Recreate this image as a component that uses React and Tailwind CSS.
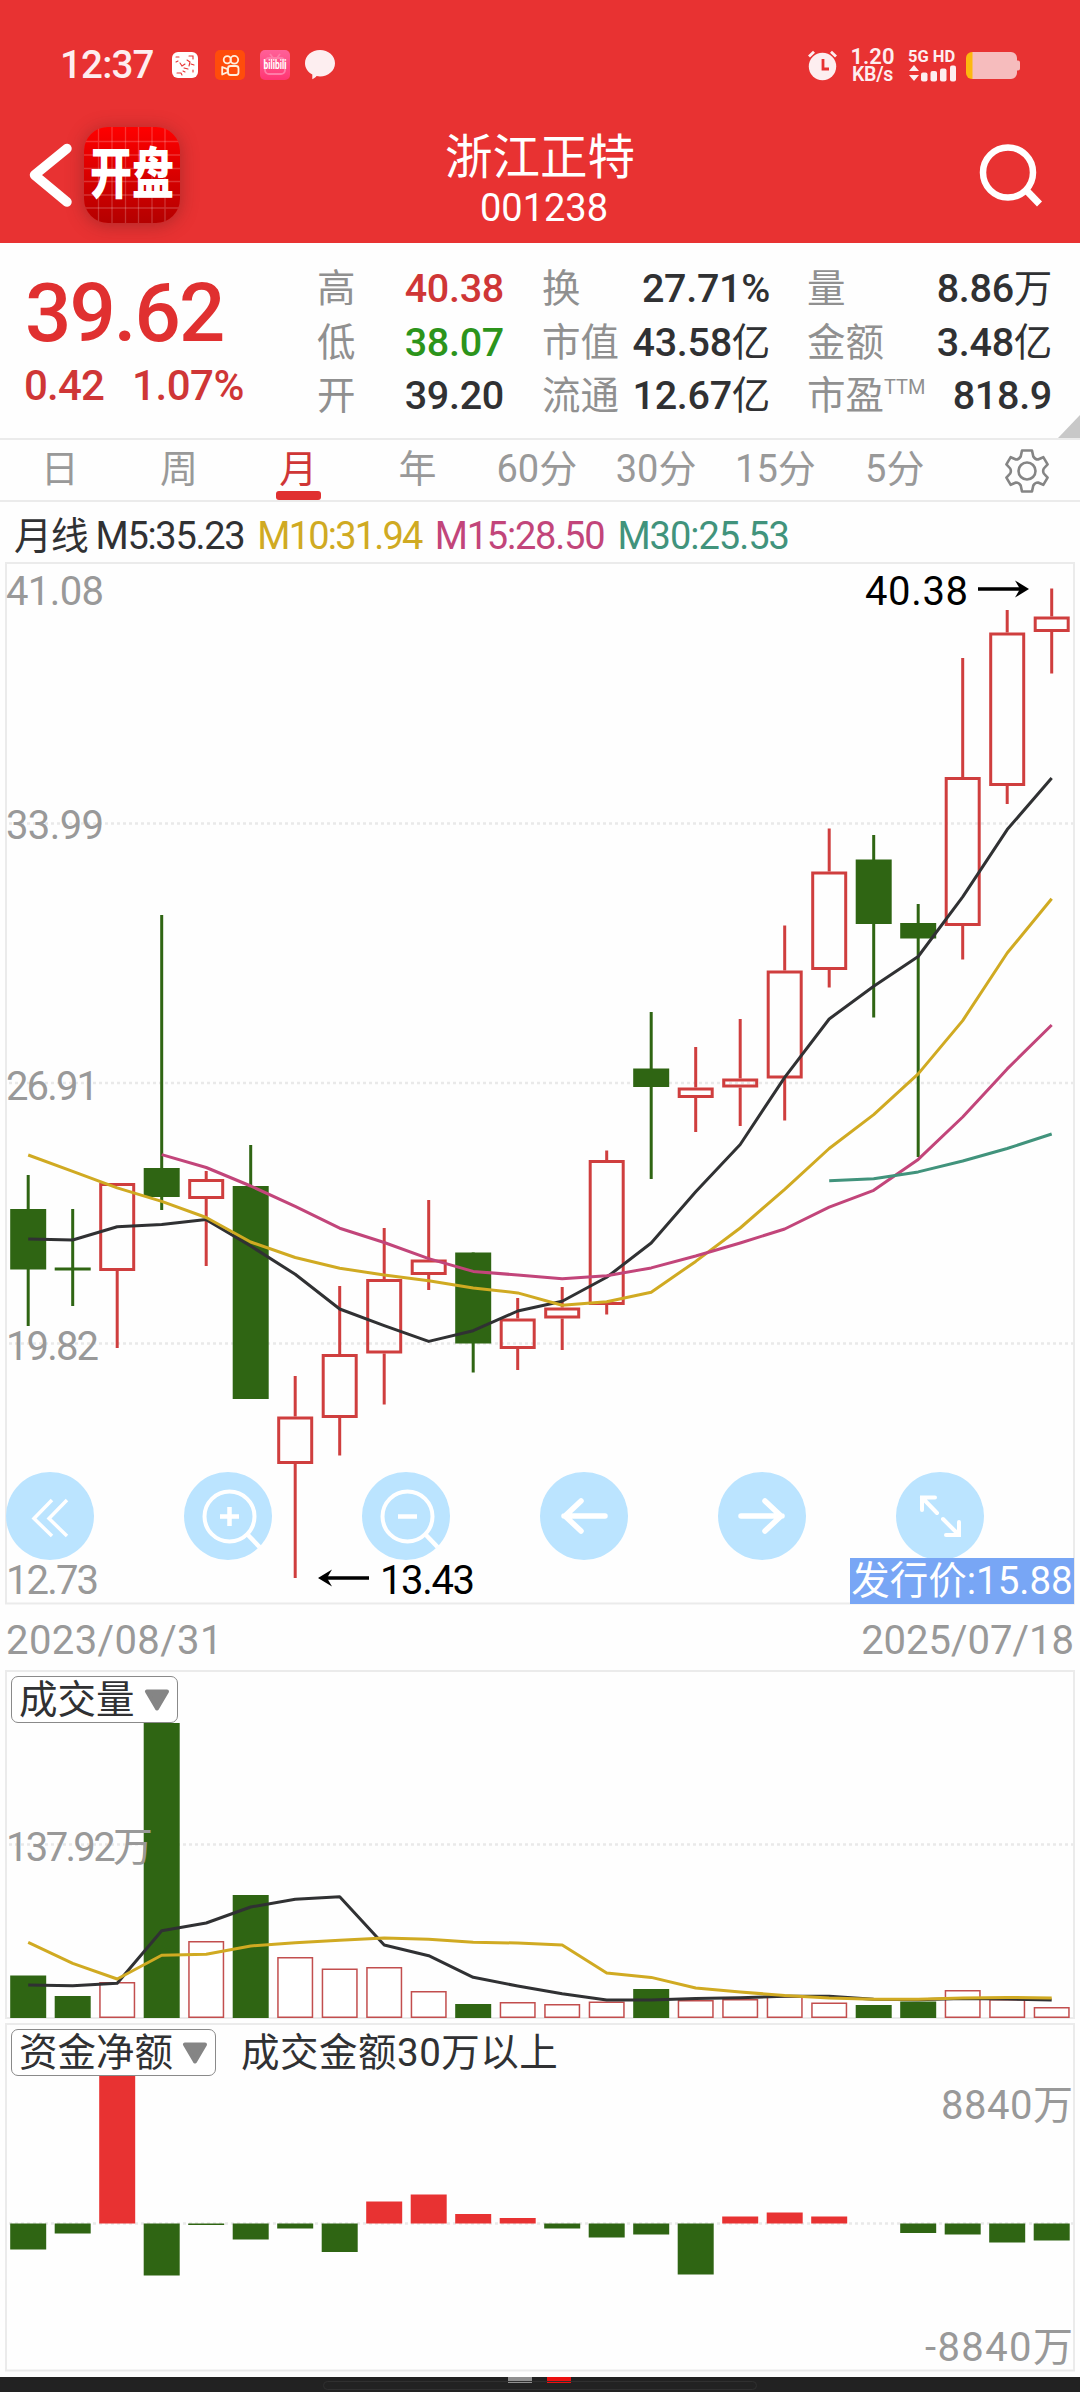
import { Fragment } from "react";

const UP = "#cf3e3e";
const DOWN = "#2f6513";
const STEP = 44.5;
const FIRST_X = 28.2;
const BAR_W = 36;

// [direction, high, body top, body bottom, low] in chart units
const candles = [
  ["down", 1175, 1209, 1269.5, 1326],
  ["down", 1209, 1267.5, 1270.5, 1306],
  ["up", 1183, 1183, 1271, 1348],
  ["down", 915, 1168, 1197, 1210],
  ["up", 1171, 1179, 1199, 1266],
  ["down", 1145, 1186, 1399, 1399],
  ["up", 1376, 1416.5, 1464, 1578],
  ["up", 1286, 1354, 1418, 1455.5],
  ["up", 1228, 1279, 1353.5, 1404.5],
  ["up", 1200, 1259.5, 1275, 1290],
  ["down", 1252.5, 1252.5, 1343.5, 1372.5],
  ["up", 1298, 1318.5, 1349, 1370],
  ["up", 1287, 1307.5, 1318.5, 1350],
  ["up", 1150.5, 1160, 1305, 1314.5],
  ["down", 1012, 1068.5, 1087, 1179],
  ["up", 1047, 1087.5, 1098, 1132],
  ["up", 1019, 1078.5, 1087.5, 1126],
  ["up", 925.5, 970.5, 1078.5, 1120.5],
  ["up", 828.5, 871.5, 970, 987.5],
  ["down", 835, 859.5, 924, 1017.5],
  ["down", 904, 923, 938.5, 1157],
  ["up", 658, 777, 926, 959.5],
  ["up", 610, 632.5, 786, 804],
  ["up", 588.5, 616.5, 632, 673.5],
];

const priceLines = [
  {
    color: "#303133",
    start: 0,
    values: [1239, 1240, 1226.8, 1224.6, 1219.6, 1246, 1274.3, 1309, 1325.7, 1341.4, 1330.7, 1311, 1301.2, 1277.3, 1243, 1191.7, 1144.5, 1077.3, 1019, 986.3, 956.5, 896.8, 829.6, 777.9],
  },
  {
    color: "#d0aa22",
    start: 0,
    values: [1155, 1171.4, 1187.9, 1201.4, 1217.5, 1242, 1257.5, 1268.2, 1275, 1280.7, 1287.9, 1292.9, 1305.2, 1301.7, 1292.2, 1261.4, 1228, 1189.3, 1148.5, 1114.6, 1073.9, 1020.6, 953, 898.8],
  },
  {
    color: "#c2457a",
    start: 3,
    values: [1154.6, 1167.5, 1186, 1206.4, 1228.2, 1242.5, 1258.6, 1271.4, 1275, 1278.8, 1275.8, 1267.9, 1256, 1243, 1229, 1207.2, 1190.3, 1159.4, 1117, 1068.9, 1025],
  },
  { color: "#41937c", start: 18, values: [1180.8, 1178.8, 1171.9, 1161, 1148.5, 1134] },
];

const volumeTops = [1975.5, 1996, 1982, 1723, 1941, 1895, 1957, 1968.5, 1967, 1991, 2004, 2002, 2004, 2001.5, 1989, 2000, 1999, 1996, 2002.5, 2005, 2001.5, 1990, 1999, 2007];

const volumeLines = [
  {
    color: "#303133",
    start: 0,
    values: [1985, 1985.7, 1983.3, 1930.7, 1923, 1907, 1899.3, 1896.7, 1945, 1955.7, 1977.3, 1986, 1993.7, 2000, 2000, 1998.6, 1997.8, 1996.3, 1996.3, 1999.3, 1999.7, 1998.6, 1999, 2000],
  },
  {
    color: "#d0aa22",
    start: 0,
    values: [1942.3, 1963.3, 1979, 1955.3, 1954.3, 1946, 1942.7, 1940.3, 1938, 1939.3, 1942.3, 1943, 1945, 1972.9, 1977.4, 1988, 1992, 1995.5, 1998, 1999.3, 1999.3, 1998, 1997.4, 1998],
  },
];

const netFlows = [-26, -10, 148, -52, -1.5, -16, -5, -28.5, 22, 29, 9.5, 5.5, -5, -14, -11, -51, 7, 11, 7, 0, -9.5, -11, -19, -17];

const stats = [
  {
    className: "ml-[317px] w-[187px]",
    rows: [
      { label: "高", value: "40.38", color: "text-[#cf3636]" },
      { label: "低", value: "38.07", color: "text-[#2c941b]" },
      { label: "开", value: "39.20", color: "text-[#303133]" },
    ],
  },
  {
    className: "ml-[38px] w-[228px]",
    rows: [
      { label: "换", value: "27.71%", color: "text-[#303133]" },
      { label: "市值", value: "43.58", unit: "亿", color: "text-[#303133]" },
      { label: "流通", value: "12.67", unit: "亿", color: "text-[#303133]" },
    ],
  },
  {
    className: "ml-[37px] w-[245px]",
    rows: [
      { label: "量", value: "8.86", unit: "万", color: "text-[#303133]" },
      { label: "金额", value: "3.48", unit: "亿", color: "text-[#303133]" },
      { label: "市盈", sup: "TTM", value: "818.9", color: "text-[#303133]" },
    ],
  },
];

const tabs = ["日", "周", "月", "年", "60分", "30分", "15分", "5分"];

const centerX = (i) => FIRST_X + i * STEP;

const toPoints = (line) => line.values.map((y, i) => `${centerX(line.start + i)},${y}`).join(" ");

function Lines({ lines }) {
  return lines.map((line, i) => (
    <polyline key={i} points={toPoints(line)} fill="none" stroke={line.color} strokeWidth="3" strokeLinejoin="round" />
  ));
}

function GridLine({ y }) {
  return <line x1="9" x2="1073" y1={y} y2={y} stroke="#e9e9e9" strokeWidth="2.5" strokeDasharray="3 3" />;
}

function Frame({ y, height }) {
  return <rect x="6" y={y} width="1068" height={height} fill="none" stroke="#ebebeb" strokeWidth="2" />;
}

function Label({ x, y, length, color = "#999999", children }) {
  return (
    <text x={x} y={y} textLength={length} fill={color} fontSize="40">
      {children}
    </text>
  );
}

function StatusBar() {
  return (
    <div className="flex h-[106px] items-center pt-[24px] pl-[60px] text-[#fdeef0]">
      <span className="w-[95px] text-[38.5px] font-medium tracking-[-0.8px]">12:37</span>
      <svg className="ml-[16px]" width="29" height="28" viewBox="0 0 29 28">
        <rect x="1" y="1" width="26" height="26" rx="6" fill="#fff" />
        <g fill="none" stroke="#e83232" strokeWidth="1.1" strokeLinecap="round">
          <path d="M5 6h3M18 5h4v3M6 22h4l1 2M22 19v2M5 11l2-1M12 20l2 1M9 12l2 3 3-2M16 9l3 2-1 4M13 17l4 1M20 13l3 1" />
        </g>
      </svg>
      <svg className="ml-[15px]" width="30" height="30" viewBox="0 0 30 30">
        <rect width="30" height="30" rx="5" fill="#ff4c0b" />
        <g fill="none" stroke="#ffeedd" strokeWidth="1.8">
          <circle cx="12.3" cy="9.8" r="3.6" />
          <circle cx="19.3" cy="9.8" r="3.9" />
          <rect x="13" y="16" width="10.5" height="9" rx="2.5" />
          <path d="M7.200 17v7.500l5.300-2.300v-3z" strokeLinejoin="round" />
        </g>
      </svg>
      <div className="relative ml-[15px] flex h-[30px] w-[30px] items-center justify-center rounded-[5px] bg-linear-to-b from-[#ff6098] to-[#ff3474]">
        <svg className="absolute inset-0" width="30" height="30" viewBox="0 0 30 30">
          <g fill="none" stroke="#ff7ba8" strokeWidth="1.8">
            <rect x="5" y="8" width="20" height="16" rx="4" />
            <path d="M10 4l3 4M20 4l-3 4" />
          </g>
        </svg>
        <span className="relative scale-y-[1.4] text-[8.5px] leading-[12px] font-bold text-white">bilibili</span>
      </div>
      <svg className="ml-[15px]" width="30" height="30" viewBox="0 0 30 30">
        <path d="M15 0c8.300 0 15 5.800 15 13.200S23.300 26.400 15 26.400c-1.200 0-2.300-.1-3.400-.3-1 1.400-2.400 2.500-4.300 3.200V24.500C2.900 22.200 0 18 0 13.200 0 5.800 6.700 0 15 0z" fill="#fdeef0" />
      </svg>

      <svg className="ml-auto" width="29" height="31" viewBox="0 0 29 31">
        <circle cx="14.5" cy="16.5" r="13.7" fill="#fdeef0" />
        <path d="M1 6.500l5-4.800M28 6.500l-5-4.800" stroke="#fdeef0" strokeWidth="2.8" />
        <path d="M15 9v10h6" fill="none" stroke="#e83232" strokeWidth="2.8" />
      </svg>
      <div className="ml-[13px] flex w-[45px] flex-col items-center font-semibold">
        <span className="text-[22px] leading-[19px]">1.20</span>
        <span className="text-[19.5px] leading-[18px] tracking-[-0.3px]">KB/s</span>
      </div>
      <div className="ml-[13px] w-[49px]">
        <div className="text-[16.5px] leading-[15px] font-bold whitespace-nowrap">5G HD</div>
        <svg width="49" height="18" viewBox="0 0 49 18">
          <g fill="#fdeef0">
            <path d="M6 1l5 6H1zM6 17l5-6H1z" />
            <rect x="13" y="8.5" width="6.5" height="9" rx="2" />
            <rect x="22.5" y="7" width="6.5" height="10.5" rx="2" />
            <rect x="32" y="4.5" width="6.5" height="13" rx="2" />
            <rect x="42" y="1.5" width="6" height="16" rx="2" />
          </g>
        </svg>
      </div>
      <svg className="mr-[60px] ml-[9px]" width="54" height="27" viewBox="0 0 54 27">
        <path d="M6 0h39a6 6 0 0 1 6 6v2.500h1a2 2 0 0 1 2 2v6a2 2 0 0 1-2 2h-1V21a6 6 0 0 1-6 6H6z" fill="#f6bcbd" />
        <path d="M6.500 0H6a6 6 0 0 0-6 6v15a6 6 0 0 0 6 6h.5z" fill="#fdb80e" />
      </svg>
    </div>
  );
}

function TitleBar() {
  return (
    <div className="grid h-[137px] grid-cols-[1fr_auto_1fr] items-center text-white">
      <div className="flex items-center pl-[27px]">
        <svg width="48" height="68" viewBox="0 0 48 68">
          <path d="M40 7.500L7.500 34l32.500 27" fill="none" stroke="#fff" strokeWidth="9.5" strokeLinecap="round" strokeLinejoin="round" />
        </svg>
        <div className="relative ml-[9px] flex h-[96px] w-[96px] items-center justify-center overflow-hidden rounded-[24px] bg-linear-to-b from-[#ff0000] to-[#b40000] shadow-[0_2px_18px_rgba(100,30,30,0.45)]">
          <svg className="absolute inset-0" width="96" height="96" viewBox="0 0 96 96">
            {[14.5, 28, 41.5, 54.5, 68, 81].map((p) => (
              <path key={p} d={`M${p} 0V96M0 ${p}H96`} stroke="#ffffff" strokeOpacity="0.2" strokeWidth="1.3" />
            ))}
          </svg>
          <span className="relative scale-y-[1.3] text-[42px] leading-none font-black">开盘</span>
        </div>
      </div>
      <div className="flex flex-col items-center pt-[14px]">
        <h1 className="text-[47.5px] leading-[52px]">浙江正特</h1>
        <p className="mt-[1px] pl-[8px] text-[38px] leading-[46px]">001238</p>
      </div>
      <svg className="mr-[37px] justify-self-end" width="64" height="66" viewBox="0 0 64 66">
        <circle cx="29" cy="30.5" r="25" fill="none" stroke="#fff" strokeWidth="6.5" />
        <path d="M47 48l13.500 14" stroke="#fff" strokeWidth="7" />
      </svg>
    </div>
  );
}

function Quote() {
  return (
    <section className="relative flex h-[197px] border-b-2 border-[#ebebeb]">
      <div className="w-0">
        <p className="mt-[22px] ml-[25px] text-[81.5px] leading-[96px] font-medium tracking-[-1.9px] text-[#e03030]">39.62</p>
        <p className="ml-[24px] flex gap-[28px] text-[42px] leading-[50px] font-medium text-[#cf3636]">
          <span className="tracking-[-0.8px]">0.42</span>
          <span className="tracking-[-0.5px]">1.07%</span>
        </p>
      </div>
      {stats.map((col) => (
        <dl key={col.className} className={`mt-[19px] shrink-0 ${col.className}`}>
          {col.rows.map((row) => (
            <div key={row.label} className="flex h-[53.5px] items-center justify-between whitespace-nowrap">
              <dt className="flex text-[38.5px] leading-[53px] text-[#909090]">
                {row.label}
                {row.sup && <sup className="top-0 text-[20px] leading-[37px]">{row.sup}</sup>}
              </dt>
              <dd className={`text-[39.5px] leading-[53px] font-medium tracking-[-0.3px] ${row.color}`}>
                {row.value}
                {row.unit && <span className="text-[38.5px] font-normal">{row.unit}</span>}
              </dd>
            </div>
          ))}
        </dl>
      ))}
      <svg className="absolute right-0 bottom-0" width="22" height="23" viewBox="0 0 22 23">
        <path d="M22 0v23H0z" fill="#c8c8c8" />
      </svg>
    </section>
  );
}

function PeriodTabs() {
  return (
    <nav className="flex h-[62px] border-b-2 border-[#ebebeb] text-[38px]">
      {tabs.map((tab) => {
        const active = tab === "月";
        return (
          <div key={tab} className={`flex w-[119.3px] flex-col items-center justify-between ${active ? "text-[#cf3636]" : "text-[#999999]"}`}>
            <span className="mt-[7px] leading-[44px]">{tab}</span>
            {active && <span className="h-[9px] w-[45px] shrink-0 rounded-[3px] bg-[#e03030]" />}
          </div>
        );
      })}
      <svg className="mt-[9px] ml-[51px]" width="44" height="44" viewBox="0 0 44 44" fill="none" stroke="#858585" strokeWidth="2.6" strokeLinejoin="round">
        <path d="M17 1.500h10l1.300 6q1.700 3 4.700 3l5.300-2.300 4.300 7.100-3.800 4.200q-1.300 2.500 0 5l3.800 4.200-4.300 7.100-5.300-2.300q-3 0-4.700 3l-1.300 6H17l-1.300-6q-1.700-3-4.700-3l-5.300 2.300-4.300-7.100 3.800-4.200q1.300-2.500 0-5l-3.800-4.200 4.300-7.100 5.300 2.300q3 0 4.700-3z" />
        <circle cx="22" cy="22" r="8.5" />
      </svg>
    </nav>
  );
}

function AverageLegend() {
  return (
    <div className="flex h-[60px] items-center gap-[13px] pt-[8px] pl-[14px] text-[38px] whitespace-nowrap">
      <span className="tracking-[-1.3px] text-[#303133]">月线 M5:35.23</span>
      <span className="tracking-[-1.8px] text-[#d0aa22]">M10:31.94</span>
      <span className="tracking-[-1.2px] text-[#c2457a]">M15:28.50</span>
      <span className="tracking-[-1px] text-[#41937c]">M30:25.53</span>
    </div>
  );
}

function Candle({ index, data }) {
  const [dir, high, top, bottom, low] = data;
  const x = centerX(index);
  if (dir === "down") {
    return (
      <g fill={DOWN}>
        <rect x={x - 1.5} y={high} width="3" height={low - high} />
        <rect x={x - BAR_W / 2} y={top} width={BAR_W} height={bottom - top} />
      </g>
    );
  }
  return (
    <g>
      <rect x={x - 1.5} y={high} width="3" height={top - high} fill={UP} />
      <rect x={x - 1.5} y={bottom} width="3" height={low - bottom} fill={UP} />
      <rect x={x - BAR_W / 2 + 1.5} y={top + 1.5} width={BAR_W - 3} height={bottom - top - 3} fill="none" stroke={UP} strokeWidth="3" />
    </g>
  );
}

function ChartControls() {
  const icons = [
    <path key="prev" d="M46 28L28 46.500 46 64M61 28L43 46.500 61 64" strokeWidth="3.5" />,
    <g key="in">
      <circle cx="45.5" cy="44.5" r="25" strokeWidth="4" />
      <path d="M63.500 62.500L75.500 75" strokeWidth="4.5" />
      <path d="M36 44.500h19M45.500 35v19" strokeWidth="4.5" />
    </g>,
    <g key="out">
      <circle cx="45.5" cy="44.5" r="25" strokeWidth="4" />
      <path d="M63.500 62.500L75.500 75" strokeWidth="4.5" />
      <path d="M36 44.500h19" strokeWidth="4.5" />
    </g>,
    <path key="left" d="M65 44H24M41 29L25 44l16 15" strokeWidth="5.5" strokeLinecap="round" />,
    <path key="right" d="M23 44h41M47 29l16 15-16 15" strokeWidth="5.5" strokeLinecap="round" />,
    <path key="full" d="M41 41L26 25.500M26 38V25.500h13M47 47l16 16M63 50v13H50" strokeWidth="4" strokeLinecap="round" />,
  ];
  return (
    <div className="absolute top-[910px] left-[6px] flex gap-[90px]">
      {icons.map((icon) => (
        <button key={icon.key} className="h-[88px] w-[88px] rounded-full bg-[#bbe4ff]">
          <svg width="88" height="88" viewBox="0 0 88 88" fill="none" stroke="#fff">
            {icon}
          </svg>
        </button>
      ))}
    </div>
  );
}

function PriceChart() {
  return (
    <section className="relative h-[1043px]">
      <svg className="block" width="1080" height="1043" viewBox="0 562 1080 1043">
        <Frame y={563} height={1040.5} />
        <GridLine y={823.5} />
        <GridLine y={1083} />
        <GridLine y={1343.5} />
        {candles.map((c, i) => (
          <Candle key={i} index={i} data={c} />
        ))}
        <Lines lines={priceLines} />
        <Label x="6" y="605" length="98">41.08</Label>
        <Label x="6" y="839" length="98">33.99</Label>
        <Label x="6" y="1100" length="93">26.91</Label>
        <Label x="6" y="1360" length="93">19.82</Label>
        <Label x="6" y="1594" length="93">12.73</Label>
        <Label x="865" y="605" length="103" color="#000">40.38</Label>
        <Label x="380" y="1594" length="95" color="#000">13.43</Label>
        <path d="M978 589h46M369 1578h-46" stroke="#000" strokeWidth="3.5" />
        <path d="M1029 589l-14-8.500 5 8.500-5 8.500z" />
        <path d="M318 1578l14-8.500-5 8.500 5 8.500z" />
      </svg>
      <ChartControls />
      <span className="absolute right-[6px] bottom-[1px] h-[46px] w-[224px] bg-[#78a6f5] text-center text-[38.5px] leading-[45px] whitespace-nowrap text-white">
        发行价:15.88
      </span>
    </section>
  );
}

function Selector({ children }) {
  return (
    <button className="flex h-[47px] items-center gap-[9px] rounded-[7px] border border-[#8a8a8a] bg-white px-[7px] text-[38.5px] leading-[45px] whitespace-nowrap text-[#303133]">
      {children}
      <svg width="26" height="22" viewBox="0 0 26 22">
        <path d="M3 2.500h20L13 19.500z" fill="#858585" stroke="#858585" strokeWidth="4" strokeLinejoin="round" />
      </svg>
    </button>
  );
}

function VolumeChart() {
  return (
    <section className="relative h-[352px]">
      <svg className="block" width="1080" height="352" viewBox="0 1670 1080 352">
        <Frame y={1671} height={347} />
        <GridLine y={1844.5} />
        {volumeTops.map((top, i) => {
          const x = centerX(i) - BAR_W / 2;
          return (
            <Fragment key={i}>
              {candles[i][0] === "down" ? (
                <rect x={x} y={top} width={BAR_W} height={2018 - top} fill={DOWN} />
              ) : (
                <rect x={x + 0.75} y={top + 0.75} width={BAR_W - 1.5} height={2016.5 - top} fill="#fff" stroke="#c24e4e" strokeWidth="1.5" />
              )}
            </Fragment>
          );
        })}
        <Lines lines={volumeLines} />
        <Label x="6" y="1861" length="147">137.92万</Label>
      </svg>
      <div className="absolute top-[6px] left-[11px]">
        <Selector>成交量</Selector>
      </div>
    </section>
  );
}

function NetFlowChart() {
  return (
    <section className="relative h-[355px]">
      <svg className="block" width="1080" height="355" viewBox="0 2022 1080 355">
        <Frame y={2024} height={346.5} />
        <GridLine y={2223.5} />
        {netFlows.map((v, i) => (
          <rect key={i} x={centerX(i) - BAR_W / 2} y={v > 0 ? 2223.5 - v : 2223.5} width={BAR_W} height={Math.abs(v)} fill={v > 0 ? "#e83232" : DOWN} />
        ))}
        <Label x="941" y="2118.5" length="132">8840万</Label>
        <Label x="925" y="2361" length="148">-8840万</Label>
      </svg>
      <div className="absolute top-[7px] left-[11px] flex items-center gap-[25px]">
        <Selector>资金净额</Selector>
        <span className="text-[38.5px] leading-[45px] tracking-[0.5px] text-[#303133]">成交金额30万以上</span>
      </div>
    </section>
  );
}

function HomeIndicator() {
  return (
    <footer className="flex h-[15px] flex-col overflow-hidden bg-[#222222]">
      <div className="flex h-[6px] shrink-0 gap-[15px] pl-[508px]">
        <span className="w-[24px] bg-[#8f8f8f]" />
        <span className="w-[24px] bg-[#ec1010]" />
      </div>
      <div className="mt-[-2px] ml-[323px] h-[9px] w-[434px] shrink-0 rounded-full border border-[#303030]" />
    </footer>
  );
}

const App = () => {
  return (
    <div className="h-[2392px] w-[1080px] overflow-hidden bg-[#fefefe] font-['Roboto','Noto_Sans_CJK_SC',sans-serif]">
      <header className="h-[243px] bg-[#e83232]">
        <StatusBar />
        <TitleBar />
      </header>
      <Quote />
      <PeriodTabs />
      <AverageLegend />
      <PriceChart />
      <div className="flex h-[65px] items-center justify-between px-[6px] pt-[6px] text-[40px] text-[#999999]">
        <span className="tracking-[0.4px]">2023/08/31</span>
        <span>2025/07/18</span>
      </div>
      <VolumeChart />
      <NetFlowChart />
      <HomeIndicator />
    </div>
  );
};

export default App;
